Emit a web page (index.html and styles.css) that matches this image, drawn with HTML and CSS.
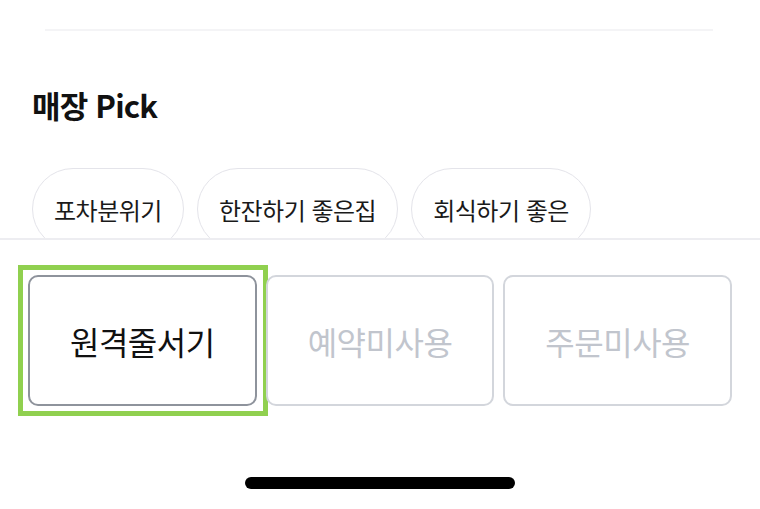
FILE: index.html
```html
<!DOCTYPE html>
<html lang="ko">
<head>
  <meta charset="UTF-8">
  <meta name="viewport" content="width=device-width, initial-scale=1.0">
  <title>매장 Pick</title>
  <link rel="stylesheet" href="styles.css">
</head>
<body>
  <div class="page">
    <hr class="divider">
    <h2 class="section-title">매장 Pick</h2>
    <div class="chips">
      <span class="chip">포차분위기</span>
      <span class="chip">한잔하기 좋은집</span>
      <span class="chip">회식하기 좋은</span>
    </div>
  </div>

  <div class="sheet">
    <div class="options">
      <button class="option selected">원격줄서기</button>
      <button class="option disabled">예약미사용</button>
      <button class="option disabled">주문미사용</button>
    </div>
    <div class="home-bar"></div>
  </div>
</body>
</html>
```

FILE: styles.css
```css
body {
  margin: 0;
  background-color: #ffffff;
  color: #111111;
  font-family: "Noto Sans CJK KR", "Noto Sans", sans-serif;
  overflow: hidden;
}

.page {
  padding-top: 29px;
}

.divider {
  margin: 0 47px 0 45px;
  border: none;
  height: 2px;
  background-color: #f4f4f6;
}

.section-title {
  margin: 54px 0 0 32px;
  font-size: 31px;
  font-weight: 700;
  line-height: 40px;
  letter-spacing: -0.8px;
}

.chips {
  display: flex;
  gap: 13px;
  margin: 43px 0 0 32px;
}

.chip {
  display: flex;
  align-items: center;
  height: 80px;
  padding: 0 21px;
  border: 1px solid #e4e4ea;
  border-radius: 41px;
  font-size: 24px;
  letter-spacing: -0.5px;
  color: #1a1a1a;
}

.sheet {
  position: fixed;
  left: 0;
  right: 0;
  top: 238px;
  bottom: 0;
  background-color: #ffffff;
  border-top: 2px solid #ededf1;
}

.options {
  display: flex;
  gap: 9px;
  padding: 35px 28px 0 28px;
}

.option {
  position: relative;
  flex: 1;
  height: 131px;
  background-color: #ffffff;
  border: 2px solid #d3d6dc;
  border-radius: 10px;
  font-family: inherit;
  font-size: 32px;
  letter-spacing: -0.5px;
  color: #c1c5cd;
}

.option.selected {
  border-color: #8e939c;
  color: #111111;
}

/* focus frame drawn square over the rounded button */
.option.selected::after {
  content: "";
  position: absolute;
  inset: -12px -13px -12px -12px;
  border: 5px solid #90d04f;
}

.home-bar {
  width: 270px;
  height: 12px;
  margin: 71px auto 0 auto;
  background-color: #000000;
  border-radius: 6px;
}
```
